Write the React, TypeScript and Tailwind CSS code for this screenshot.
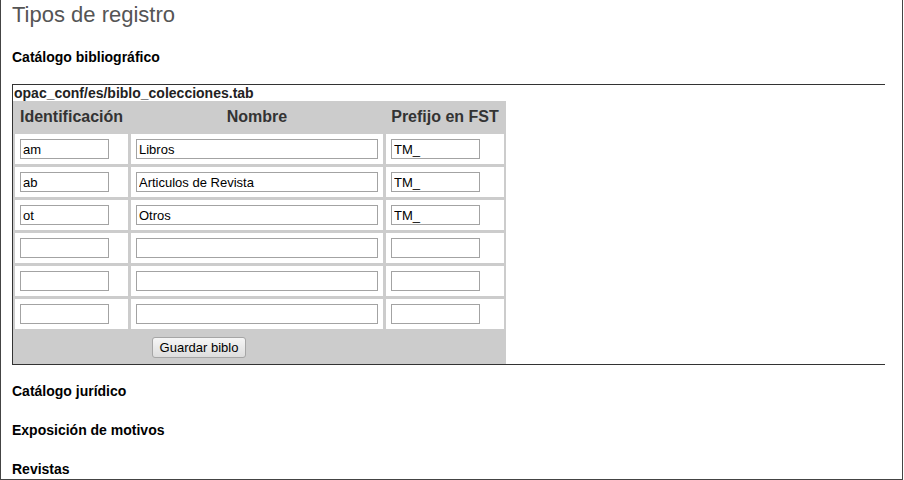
import React from "react";

type Fila = { id: string; nombre: string; prefijo: string };

const filas: Fila[] = [
  { id: "am", nombre: "Libros", prefijo: "TM_" },
  { id: "ab", nombre: "Articulos de Revista", prefijo: "TM_" },
  { id: "ot", nombre: "Otros", prefijo: "TM_" },
  { id: "", nombre: "", prefijo: "" },
  { id: "", nombre: "", prefijo: "" },
  { id: "", nombre: "", prefijo: "" },
];

const inputCls =
  "h-[20px] border border-[#a3a3a3] bg-white px-[2px] text-[13px] text-black outline-none";

const App: React.FC = () => {
  return (
    <div
      className="w-[903px] h-[480px] overflow-hidden border-l border-r border-b border-[#444] bg-white pl-[11px]"
      style={{ fontFamily: '"Liberation Sans", Arial, sans-serif' }}
    >
      {/* titulo */}
      <h1 className="h-[30px] leading-[30px] text-[22px] font-normal text-[#555]">Tipos de registro</h1>

      <h3 className="mt-[18px] h-[18px] leading-[18px] text-[14px] font-bold text-black">
        Catálogo bibliográfico
      </h3>

      {/* caja de la tabla */}
      <div className="mt-[18px] w-[873px] border-t border-l border-b border-[#333]">
        <div className="h-[16px] leading-[16px] pl-[1px] text-[14px] font-bold text-[#222]">
          opac_conf/es/biblo_colecciones.tab
        </div>

        <div className="w-[493px] bg-[#cccccc] p-[2px] grid grid-cols-[113px_252px_118px] gap-[3px]">
          <div className="h-[28px] flex items-center justify-center text-[16px] font-bold text-[#333]">
            Identificación
          </div>
          <div className="h-[28px] flex items-center justify-center text-[16px] font-bold text-[#333]">
            Nombre
          </div>
          <div className="h-[28px] flex items-center justify-center text-[16px] font-bold text-[#333]">
            Prefijo en FST
          </div>

          {filas.map((f, i) => (
            <React.Fragment key={i}>
              <div className="h-[30px] bg-white flex items-center px-[5px]">
                <input className={`${inputCls} w-[89px]`} defaultValue={f.id} />
              </div>
              <div className="h-[30px] bg-white flex items-center px-[5px]">
                <input className={`${inputCls} w-[243px]`} defaultValue={f.nombre} />
              </div>
              <div className="h-[30px] bg-white flex items-center px-[5px]">
                <input className={`${inputCls} w-[89px]`} defaultValue={f.prefijo} />
              </div>
            </React.Fragment>
          ))}

          <div className="col-span-2 h-[30px] flex items-center justify-center">
            <button className="h-[21px] px-[7px] rounded-[3px] border border-[#a6a6a6] bg-gradient-to-b from-[#f6f6f6] to-[#dddddd] text-[13px] text-black leading-none">
              Guardar biblo
            </button>
          </div>
          <div className="h-[30px]"></div>
        </div>
      </div>

      <h3 className="mt-[17px] h-[18px] leading-[18px] text-[14px] font-bold text-black">Catálogo jurídico</h3>
      <h3 className="mt-[21px] h-[18px] leading-[18px] text-[14px] font-bold text-black">Exposición de motivos</h3>
      <h3 className="mt-[21px] h-[18px] leading-[18px] text-[14px] font-bold text-black">Revistas</h3>
    </div>
  );
};

export default App;
